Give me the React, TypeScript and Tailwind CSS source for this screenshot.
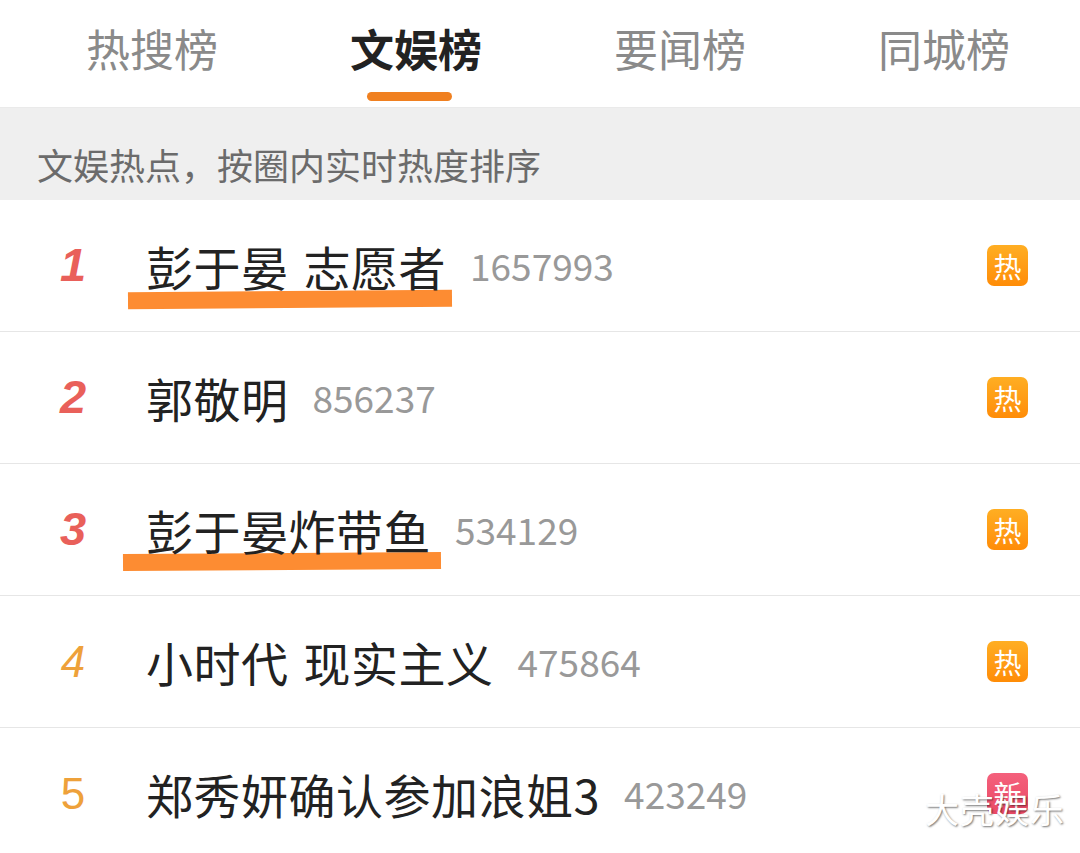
import React from "react";

const font = { fontFamily: '"Noto Sans CJK SC", "Noto Sans", sans-serif' };

const tabs = ["热搜榜", "文娱榜", "要闻榜", "同城榜"];

const items = [
  { rank: 1, title: "彭于晏 志愿者", num: "1657993", tag: "热", mark: "left-[128px] top-[91px] w-[324px]" },
  { rank: 2, title: "郭敬明", num: "856237", tag: "热" },
  { rank: 3, title: "彭于晏炸带鱼", num: "534129", tag: "热", mark: "left-[123px] top-[89px] w-[318px]" },
  { rank: 4, title: "小时代 现实主义", num: "475864", tag: "热" },
  { rank: 5, title: "郑秀妍确认参加浪姐3", num: "423249", tag: "新" },
];

function Rank({ n }: { n: number }) {
  if (n <= 3) {
    return (
      <span className="font-['Liberation_Sans',sans-serif] text-[47px] font-bold italic text-[#e9605a]">
        {n}
      </span>
    );
  }
  return (
    <span className={`font-['Liberation_Sans',sans-serif] text-[44px] text-[#eea13a] ${n === 4 ? "italic" : ""}`}>
      {n}
    </span>
  );
}

export default function App() {
  return (
    <div className="relative h-[853px] w-[1080px] overflow-hidden bg-white" style={font}>
      {/* tabs */}
      <div className="grid h-[108px] grid-cols-4 border-b border-[#eaeaea] pl-[20px] pr-[4px]">
        {tabs.map((t, i) => (
          <div key={t} className="flex flex-col items-center">
            <span
              className={`mt-[20px] text-[44px] leading-[56px] ${
                i === 1 ? "font-bold text-[#222]" : "text-[#8a8a8a]"
              }`}
            >
              {t}
            </span>
            {i === 1 && <span className="mr-[14px] mt-[16px] h-[9px] w-[85px] rounded-full bg-[#f08020]" />}
          </div>
        ))}
      </div>

      {/* subtitle */}
      <div className="flex h-[92px] items-center bg-[#efefef] pl-[37px] pt-[20px]">
        <span className="text-[36px] leading-none text-[#6b6b6b]">文娱热点，按圈内实时热度排序</span>
      </div>

      {/* list */}
      {items.map((it) => (
        <div key={it.rank} className="relative flex h-[132px] items-center border-b border-[#e6e6e6]">
          {it.mark && (
            <span className={`absolute h-[17px] -rotate-[0.4deg] bg-[#fd8c32] ${it.mark}`} />
          )}
          <div className="flex w-[146px] justify-center">
            <Rank n={it.rank} />
          </div>
          <span className="relative text-[47px] leading-none tracking-[0.5px] text-[#222] [word-spacing:4px]">
            {it.title}
          </span>
          <span className="relative ml-[24px] text-[37px] leading-none text-[#999]">{it.num}</span>
          <span
            className={`relative ml-auto mr-[52px] flex h-[41px] w-[41px] items-center justify-center rounded-[7px] text-[28px] leading-none text-white ${
              it.tag === "热"
                ? "bg-gradient-to-b from-[#ffae22] to-[#ff8c06]"
                : "bg-gradient-to-b from-[#f4607c] to-[#ea4a66]"
            }`}
          >
            {it.tag}
          </span>
        </div>
      ))}

      {/* watermark */}
      <span className="absolute left-[925px] top-[792px] text-[34px] leading-none tracking-[1px] text-white [text-shadow:1px_1px_2px_rgba(0,0,0,0.55)]">
        大壳娱乐
      </span>
    </div>
  );
}
